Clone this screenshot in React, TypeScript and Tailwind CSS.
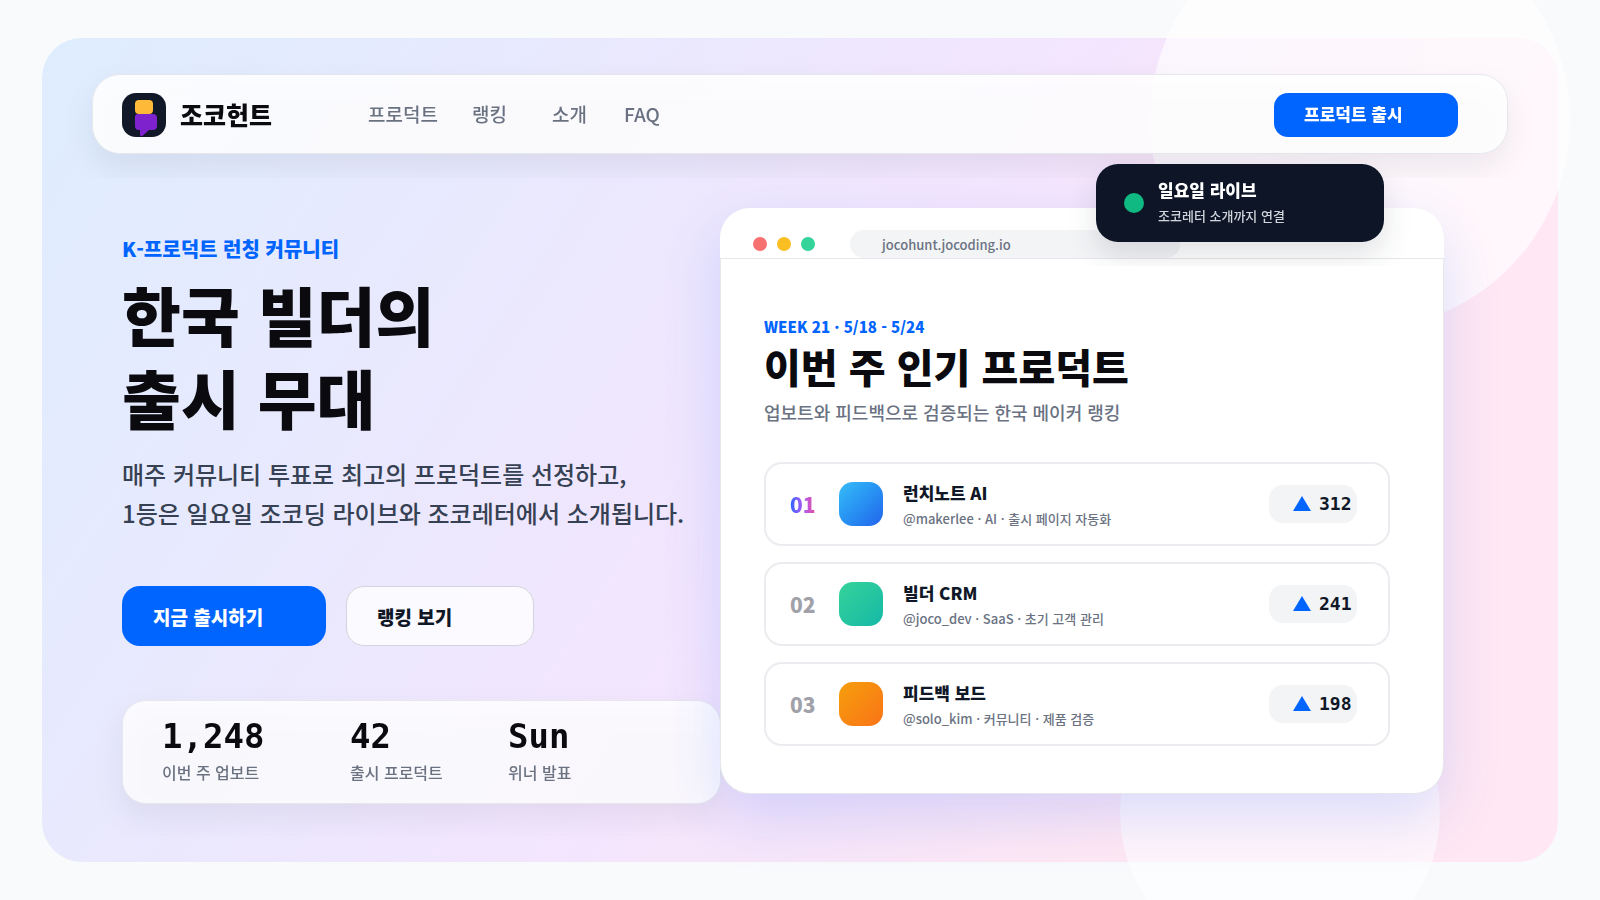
type Product = {
  rank: string;
  rankClass: string;
  iconClass: string;
  name: string;
  meta: string;
  votes: number;
};

const navLinks = [
  { label: '프로덕트', href: '#products', className: 'w-[104px]' },
  { label: '랭킹', href: '#ranking', className: 'w-20' },
  { label: '소개', href: '#about', className: 'w-18' },
  { label: 'FAQ', href: '#faq', className: '' },
];

const stats = [
  { value: '1,248', label: '이번 주 업보트', className: 'w-47' },
  { value: '42', label: '출시 프로덕트', className: 'w-[158px]' },
  { value: 'Sun', label: '위너 발표', className: '' },
];

const products: Product[] = [
  {
    rank: '01',
    rankClass: 'bg-linear-to-r from-[#0064ff] via-[#a855f7] to-[#ec4899] bg-clip-text text-transparent',
    iconClass: 'from-[#38bdf8] to-[#2563eb]',
    name: '런치노트 AI',
    meta: '@makerlee · AI · 출시 페이지 자동화',
    votes: 312,
  },
  {
    rank: '02',
    rankClass: 'text-[#a1a1aa]',
    iconClass: 'from-[#34d399] to-[#14b8a6]',
    name: '빌더 CRM',
    meta: '@joco_dev · SaaS · 초기 고객 관리',
    votes: 241,
  },
  {
    rank: '03',
    rankClass: 'text-[#a1a1aa]',
    iconClass: 'from-[#f59e0b] to-[#f97316]',
    name: '피드백 보드',
    meta: '@solo_kim · 커뮤니티 · 제품 검증',
    votes: 198,
  },
];

const Logo = () => (
  <svg width="44" height="44" viewBox="0 0 44 44" aria-hidden="true">
    <rect width="44" height="44" rx="14" fill="#111827" />
    <rect x="13" y="7" width="18" height="14" rx="4" fill="#ffb938" />
    <path
      d="M16 21h15a4 4 0 0 1 4 4v8a4 4 0 0 1-4 4h-4l-6 5.600q-3 2-3-1.600v-4h-1a4 4 0 0 1-4-4v-9a3 3 0 0 1 3-3z"
      fill="#7e22ce"
    />
  </svg>
);

// Top navigation bar
const Header = () => (
  <header className="flex h-20 items-center rounded-[28px] border border-gray-200 bg-white/85 pt-px pr-[49px] pl-[29px] drop-shadow-[0_14px_14px_rgba(15,23,42,0.08)] [clip-path:inset(-16px_-80px_-24px_-80px)]">
    <a href="#top" className="flex w-[246px] shrink-0 items-center gap-3.5 text-[25px] leading-8 font-black text-[#0a0a0f]">
      <Logo />
      <span className="pb-0.5">조코헌트</span>
    </a>
    <nav className="flex text-[19px] font-medium text-gray-500">
      {navLinks.map((link) => (
        <a key={link.label} href={link.href} className={link.className}>
          {link.label}
        </a>
      ))}
    </nav>
    <button type="button" className="ml-auto h-11 w-46 rounded-[14px] bg-[#0064ff] pb-0.5 pl-[30px] text-left text-[17px] font-black text-white">
      프로덕트 출시
    </button>
  </header>
);

const Hero = () => (
  <section className="flex min-w-0 flex-[598] flex-col pt-[27px]">
    <p className="text-xl leading-7 font-black text-[#0064ff]">K-프로덕트 런칭 커뮤니티</p>
    <h1 className="mt-[9px] text-[64px] leading-[83px] font-black text-[#0a0a0f]">
      한국 빌더의
      <br />
      출시 무대
    </h1>
    <p className="mt-4 text-2xl leading-[39px] font-medium whitespace-nowrap text-gray-700">
      매주 커뮤니티 투표로 최고의 프로덕트를 선정하고,
      <br />
      1등은 일요일 조코딩 라이브와 조코레터에서 소개됩니다.
    </p>
    <div className="mt-[54px] flex gap-5">
      <button type="button" className="h-15 w-51 rounded-[18px] bg-[#0064ff] pt-0.5 pl-[31px] text-left text-[19px] font-black text-white">
        지금 출시하기
      </button>
      <button type="button" className="h-15 w-47 rounded-[18px] border border-gray-300 bg-white/80 pt-0.5 pl-[30px] text-left text-[19px] font-black text-gray-900">
        랭킹 보기
      </button>
    </div>
    <dl className="mt-[54px] -mr-px flex h-26 rounded-3xl border border-gray-200 bg-white/80 pt-[15px] pl-[39px] drop-shadow-[0_14px_14px_rgba(15,23,42,0.08)] [clip-path:inset(-20px_-60px_-32px_-60px)]">
      {stats.map((stat) => (
        <div key={stat.label} className={`flex flex-col-reverse justify-end ${stat.className}`}>
          <dt className="text-base leading-8 font-medium text-gray-500">{stat.label}</dt>
          <dd className="font-['DejaVu_Sans_Mono',monospace] text-[34px] leading-10 font-bold text-[#0a0a0f]">{stat.value}</dd>
        </div>
      ))}
    </dl>
  </section>
);

const ProductRow = ({ product }: { product: Product }) => (
  <li className="flex h-21 items-center rounded-[18px] border-2 border-[#ebecef] bg-white pr-[31px] pl-6">
    <span className="w-[49px]">
      <span className={`text-[21px] leading-8 font-black ${product.rankClass}`}>{product.rank}</span>
    </span>
    <span className={`size-11 rounded-[14px] bg-linear-to-br ${product.iconClass}`} />
    <div className="ml-5 min-w-0 flex-1 pt-px">
      <h3 className="text-[17px] leading-7 font-black text-gray-900">{product.name}</h3>
      <p className="text-[13px] leading-6 font-medium text-gray-500">{product.meta}</p>
    </div>
    <button
      type="button"
      aria-label={`${product.name} 업보트`}
      className="flex h-[38px] w-22 items-center gap-2 rounded-[14px] bg-gray-100 pl-6 font-['DejaVu_Sans_Mono',monospace] text-lg font-bold text-gray-900"
    >
      <svg className="mb-0.5" width="18" height="15" viewBox="0 0 18 15" aria-hidden="true">
        <path d="M9 0l9 15H0z" fill="#0064ff" />
      </svg>
      {product.votes}
    </button>
  </li>
);

const LiveToast = () => (
  <aside className="absolute -top-11 right-15 flex h-[78px] w-72 items-center rounded-[22px] bg-[#0d1526] pl-7 drop-shadow-[0_14px_14px_rgba(15,23,42,0.12)] [clip-path:inset(-16px_-60px_-24px_-60px)]">
    <span className="size-5 rounded-full bg-[#10b981]" />
    <div className="ml-3.5 pb-0.5">
      <p className="text-[17px] leading-7 font-black text-white">일요일 라이브</p>
      <p className="text-[13px] leading-6 font-medium text-gray-300">조코레터 소개까지 연결</p>
    </div>
  </aside>
);

// Browser window with this week's ranking
const RankingWindow = () => (
  <section className="relative min-w-0 flex-[724]">
    <div className="rounded-[30px] border border-gray-200 bg-white shadow-[0_24px_56px_rgba(40,100,255,0.17)]">
      <div className="-mx-px -mt-px flex h-[51px] items-end rounded-t-[30px] border-b border-gray-200 bg-white">
        <div className="mb-[7px] ml-[33px] flex gap-2.5">
          <span className="size-3.5 rounded-full bg-[#f87171]" />
          <span className="size-3.5 rounded-full bg-[#fbbf24]" />
          <span className="size-3.5 rounded-full bg-[#34d399]" />
        </div>
        <span className="ml-[35px] h-7 w-[330px] rounded-[14px] bg-gray-100 pt-px pl-8 text-[13px] leading-7 font-medium text-gray-500">
          jocohunt.jocoding.io
        </span>
      </div>
      <div className="pt-14 pr-[53px] pb-[47px] pl-[43px]">
        <p className="text-[15px] leading-6 font-black text-[#0064ff]">WEEK 21 · 5/18 - 5/24</p>
        <h2 className="mt-px text-[40px] leading-[52px] font-black text-[#0a0a0f]">이번 주 인기 프로덕트</h2>
        <p className="mt-1.5 text-lg leading-7 font-medium text-gray-500">업보트와 피드백으로 검증되는 한국 메이커 랭킹</p>
        <ol className="mt-9 flex flex-col gap-4">
          {products.map((product) => (
            <ProductRow key={product.rank} product={product} />
          ))}
        </ol>
      </div>
    </div>
    <LiveToast />
  </section>
);

function App() {
  return (
    <div
      id="top"
      lang="ko"
      className="relative flex min-h-screen flex-col overflow-hidden bg-slate-50 px-[42px] py-[38px] font-['Noto_Sans_CJK_KR',sans-serif]"
    >
      <div className="flex-1 rounded-[40px] bg-[linear-gradient(123deg,#deedfe_0%,#f3e5fd_52%,#ffe8f3_78%)] px-[50px] pt-9 pb-[58px]">
        {/* Soft background circles */}
        <div className="absolute -top-[90px] right-[30px] size-[420px] rounded-full bg-white/65" />
        <div className="absolute right-40 -bottom-[72px] size-80 rounded-full bg-white/55" />
        <div className="relative">
          <Header />
          <main className="mt-[54px] flex items-start pr-16 pl-[30px]">
            <Hero />
            <RankingWindow />
          </main>
        </div>
      </div>
    </div>
  );
}

export default App;
